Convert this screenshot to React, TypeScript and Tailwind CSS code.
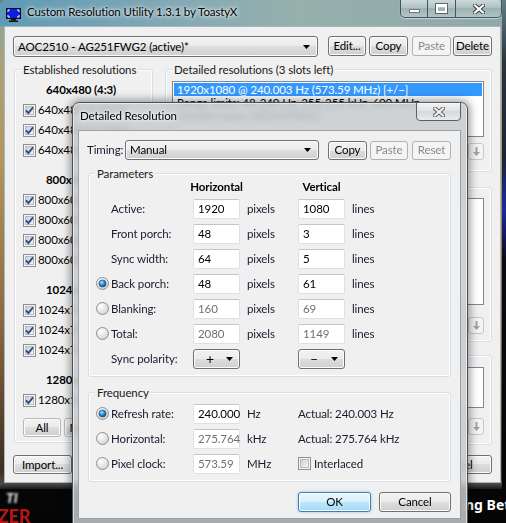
import React from "react";

type BP = { children?: React.ReactNode; className?: string; disabled?: boolean; focused?: boolean };

function Btn({ children, className = "", disabled, focused }: BP) {
  const look = disabled
    ? "border-[#adb2b5] bg-[#f4f4f4] text-[#8a8a8a]"
    : focused
    ? "border-[#3c7fb1] bg-[linear-gradient(#eaf6fd_0%,#d9f0fc_50%,#bee6fd_50%,#a7d9f5_100%)] text-black shadow-[inset_0_0_0_1px_#ffffff,0_0_3px_#7fc4ef]"
    : "border-[#707070] bg-[linear-gradient(#f2f2f2_0%,#ebebeb_50%,#dddddd_50%,#cfcfcf_100%)] text-black shadow-[inset_0_0_0_1px_#fcfcfc]";
  return (
    <div className={`flex shrink-0 items-center justify-center rounded-[3px] border text-[11.5px] leading-none ${look} ${className}`}>
      {children}
    </div>
  );
}

const DownTri = () => (
  <svg width="7" height="4" viewBox="0 0 7 4" className="shrink-0">
    <path d="M0 0H7L3.5 4Z" fill="#000" />
  </svg>
);

function Combo({ text, className = "" }: { text: string; className?: string }) {
  return (
    <div
      className={`flex shrink-0 items-center justify-between rounded-[3px] border border-[#707070] bg-[linear-gradient(#f2f2f2_0%,#ebebeb_50%,#dddddd_50%,#cfcfcf_100%)] pl-[4px] pr-[7px] text-[11.5px] leading-none shadow-[inset_0_0_0_1px_#fcfcfc] ${className}`}
    >
      <span className="whitespace-nowrap">{text}</span>
      <DownTri />
    </div>
  );
}

function Check({ checked }: { checked?: boolean }) {
  return (
    <svg width="13" height="13" viewBox="0 0 13 13" className="shrink-0">
      <defs>
        <linearGradient id="cbg" x1="0" y1="0" x2="1" y2="1">
          <stop offset="0" stopColor="#c9ced6" />
          <stop offset="1" stopColor="#f6f7f8" />
        </linearGradient>
      </defs>
      <rect x="0.5" y="0.5" width="12" height="12" fill="#f6f6f6" stroke="#8e8f8f" />
      <rect x="2.5" y="2.5" width="8" height="8" fill="url(#cbg)" stroke="#b5bac1" />
      {checked && <path d="M3 6.3 L5.4 9 L10 3.4" fill="none" stroke="#2f4584" strokeWidth="1.8" />}
    </svg>
  );
}

function Radio({ checked }: { checked?: boolean }) {
  return (
    <svg width="13" height="13" viewBox="0 0 13 13" className="shrink-0">
      <defs>
        <radialGradient id="rbg" cx="0.35" cy="0.3" r="0.8">
          <stop offset="0" stopColor="#ffffff" />
          <stop offset="1" stopColor="#d0d0d0" />
        </radialGradient>
        <radialGradient id="rdot" cx="0.4" cy="0.35" r="0.75">
          <stop offset="0" stopColor="#a5e8ff" />
          <stop offset="0.45" stopColor="#2b8fd8" />
          <stop offset="1" stopColor="#0b3a74" />
        </radialGradient>
      </defs>
      <circle cx="6.5" cy="6.5" r="6" fill="url(#rbg)" stroke="#8e8f8f" />
      {checked && <circle cx="6.5" cy="6.5" r="3.6" fill="url(#rdot)" stroke="#18467d" strokeWidth="0.6" />}
    </svg>
  );
}

function Inp({ v, grey }: { v: string; grey?: boolean }) {
  return (
    <div
      className={`flex h-[20px] w-[47px] shrink-0 items-center rounded-[2px] border border-[#dde1e6] border-t-[#c2c6cb] bg-white pl-[4px] text-[11.5px] leading-none ${
        grey ? "text-[#707070]" : "text-black"
      }`}
    >
      {v}
    </div>
  );
}

function Group({ label, className = "", children }: { label: string; className?: string; children?: React.ReactNode }) {
  return (
    <div className={`relative shrink-0 rounded-[3px] border border-[#d5dfe5] shadow-[inset_0_0_0_1px_#ffffff] ${className}`}>
      <span className="absolute left-[6px] top-[-8px] whitespace-nowrap bg-[#f0f0f0] px-[2px] text-[11.5px] leading-[16px] text-[#1a1a1a]">
        {label}
      </span>
      {children}
    </div>
  );
}

function ArrowBtn({ up }: { up?: boolean }) {
  return (
    <div className="flex h-[17px] w-[16px] items-center justify-center rounded-[3px] border border-[#c4c8cc] bg-[#f4f4f4]">
      <svg width="7" height="9" viewBox="0 0 7 9">
        <path d={up ? "M2.5 9H4.5V4H7L3.5 0L0 4H2.5Z" : "M2.5 0H4.5V5H7L3.5 9L0 5H2.5Z"} fill="#a3a3a3" />
      </svg>
    </div>
  );
}

function XGlyph({ color = "#ffffff", outline = "#3a3a3a" }: { color?: string; outline?: string }) {
  return (
    <svg width="12" height="10" viewBox="0 0 12 10">
      <path d="M2 1.5 L10 8.5 M10 1.5 L2 8.5" stroke={outline} strokeWidth="4" strokeLinecap="square" />
      <path d="M2 1.5 L10 8.5 M10 1.5 L2 8.5" stroke={color} strokeWidth="2.2" strokeLinecap="square" />
    </svg>
  );
}

function Caption() {
  const glass =
    "bg-[linear-gradient(180deg,rgba(255,255,255,0.55)_0%,rgba(255,255,255,0.28)_45%,rgba(255,255,255,0.1)_50%,rgba(255,255,255,0.3)_100%)]";
  return (
    <div className="ml-auto flex h-[18px] overflow-hidden rounded-b-[5px] border border-t-0 border-[#46545e] shadow-[0_1px_1px_rgba(255,255,255,0.5)]">
      <div className={`flex w-[27px] items-end justify-center border-r border-[#46545e] pb-[4px] ${glass}`}>
        <div className="h-[4px] w-[11px] border border-[#3c3c3c]/70 bg-white" />
      </div>
      <div className={`flex w-[28px] items-center justify-center border-r border-[#46545e] ${glass}`}>
        <div className="h-[9px] w-[11px] border-[2px] border-t-[3px] border-white shadow-[0_0_0_1px_rgba(40,40,40,0.6)]" />
      </div>
      <div className={`flex w-[45px] items-center justify-center ${glass}`}>
        <XGlyph />
      </div>
    </div>
  );
}

function AppIcon() {
  return (
    <svg width="15" height="14" viewBox="0 0 15 14" className="ml-[6px] mt-[8px] shrink-0">
      <rect x="0.5" y="0.5" width="14" height="10" fill="#0b1ee0" stroke="#101010" />
      <path d="M2 2H4M2 2V4M13 2H11M13 2V4M2 9H4M2 9V7M13 9H11M13 9V7" stroke="#ffffff" strokeWidth="1" fill="none" />
      <rect x="5" y="11" width="5" height="1.5" fill="#101010" />
      <rect x="3" y="12.5" width="9" height="1.5" fill="#101010" />
    </svg>
  );
}

const established = [
  { h: "640x480 (4:3)", r: ["640x480 @ 60 Hz", "640x480 @ 72 Hz", "640x480 @ 75 Hz"] },
  { h: "800x600 (4:3)", r: ["800x600 @ 56 Hz", "800x600 @ 60 Hz", "800x600 @ 72 Hz", "800x600 @ 75 Hz"] },
  { h: "1024x768 (4:3)", r: ["1024x768 @ 60 Hz", "1024x768 @ 70 Hz", "1024x768 @ 75 Hz"] },
  { h: "1280x1024 (5:4)", r: ["1280x1024 @ 75 Hz"] },
];

const params = [
  { radio: false, show: false, label: "Active:", h: "1920", v: "1080", grey: false },
  { radio: false, show: false, label: "Front porch:", h: "48", v: "3", grey: false },
  { radio: false, show: false, label: "Sync width:", h: "64", v: "5", grey: false },
  { radio: true, show: true, label: "Back porch:", h: "48", v: "61", grey: false },
  { radio: false, show: true, label: "Blanking:", h: "160", v: "69", grey: true },
  { radio: false, show: true, label: "Total:", h: "2080", v: "1149", grey: true },
];

function Listbox({ className = "", items, selected }: { className?: string; items: string[]; selected?: number }) {
  return (
    <div className={`shrink-0 overflow-hidden border border-[#828790] bg-white p-[1px] ${className}`}>
      {items.map((t, i) => (
        <div
          key={i}
          className={`whitespace-nowrap pl-[3px] text-[11.5px] leading-[13px] ${
            i === selected ? "bg-[#3399ff] text-white" : "text-black"
          }`}
        >
          {t}
        </div>
      ))}
    </div>
  );
}

function MainClient() {
  return (
    <div className="ml-[4px] flex h-[457px] w-[497px] flex-col border border-[#a9b5bb] bg-[#f0f0f0] pl-[8px] pt-[9px]">
      <div className="flex h-[21px] items-start">
        <Combo text="AOC2510 - AG251FWG2 (active)*" className="h-[21px] w-[305px]" />
        <Btn className="ml-[10px] h-[20px] w-[38px]">Edit...</Btn>
        <Btn className="ml-[3px] h-[20px] w-[39px]">Copy</Btn>
        <Btn disabled className="ml-[4px] h-[20px] w-[39px]">Paste</Btn>
        <Btn className="ml-[2px] h-[20px] w-[39px]">Delete</Btn>
      </div>
      <div className="ml-[1px] mt-[12px] flex items-start">
        <div className="flex w-[139px] flex-col">
          <Group label="Established resolutions" className="h-[374px] w-[139px] pt-[10px]">
            {established.map((g, gi) => (
              <div key={gi} className={gi > 0 ? "mt-[10px]" : ""}>
                <div className="flex h-[20px] items-center whitespace-nowrap pl-[31px] font-bold">{g.h}</div>
                {g.r.map((r) => (
                  <div key={r} className="flex h-[20px] items-center gap-[2px] whitespace-nowrap pl-[8px]">
                    <Check checked />
                    <span>{r}</span>
                  </div>
                ))}
              </div>
            ))}
            <div className="mt-[8px] flex gap-[3px] pl-[8px]">
              <Btn className="h-[19px] w-[38px] border-[#b4b9be] bg-[#f4f4f4] text-[#7f8ca6]">All</Btn>
              <Btn className="h-[19px] w-[38px] border-[#b4b9be] bg-[#f4f4f4] text-[#7f8ca6]">None</Btn>
            </div>
          </Group>
          <Btn className="ml-[-1px] mt-[12px] h-[19px] w-[59px]">Import...</Btn>
        </div>
        <div className="ml-[12px] flex w-[327px] flex-col">
          <Group label="Detailed resolutions (3 slots left)" className="h-[103px] w-[327px] pl-[6px] pt-[11px]">
            <Listbox
              className="h-[56px] w-[312px]"
              selected={0}
              items={[
                "1920x1080 @ 240.003 Hz (573.59 MHz) [+/\u2212]",
                "Range limits: 48-240 Hz, 255-255 kHz, 600 MHz",
                "Monitor name: AG251FWG2",
              ]}
            />
            <div className="mt-[6px] flex w-[312px] justify-end gap-[2px]">
              <ArrowBtn up />
              <ArrowBtn />
            </div>
          </Group>
          <Group label="Standard resolutions" className="mt-[15px] h-[155px] w-[327px] pl-[6px] pt-[10px]">
            <Listbox
              className="h-[107px] w-[312px]"
              items={["1920x1080 @ 60 Hz", "1680x1050 @ 60 Hz", "1440x900 @ 60 Hz", "1280x1024 @ 60 Hz", "1280x720 @ 60 Hz"]}
            />
            <div className="mt-[12px] flex w-[312px] justify-end gap-[2px]">
              <ArrowBtn up />
              <ArrowBtn />
            </div>
          </Group>
          <Group label="Extension blocks" className="mt-[13px] h-[90px] w-[327px] pl-[6px] pt-[11px]">
            <Listbox className="h-[41px] w-[312px]" items={["CEA-861", "DisplayID 1.3"]} />
            <div className="mt-[10px] flex w-[312px] justify-end gap-[2px]">
              <ArrowBtn up />
              <ArrowBtn />
            </div>
          </Group>
          <div className="mt-[10px] flex justify-end">
            <Btn className="h-[19px] w-[72px]">OK</Btn>
            <Btn className="ml-[8px] h-[19px] w-[72px]">Cancel</Btn>
          </div>
        </div>
      </div>
    </div>
  );
}

function Dialog() {
  const lab = "text-[#1a1a2e]";
  return (
    <div className="absolute left-[72px] top-[102px] h-[425px] w-[396px] rounded-t-[7px] border border-[#4b5055] bg-[#c6cacd]/85 shadow-[0_0_9px_2px_rgba(0,0,0,0.4),inset_0_0_0_1px_rgba(255,255,255,0.55)] backdrop-blur-[3px]">
      <div className="flex h-[27px] items-start">
        <span className="ml-[7px] mt-[6px] whitespace-nowrap text-[11.5px] leading-[14px] text-black [text-shadow:0_0_6px_#ffffff,0_0_3px_#ffffff]">
          Detailed Resolution
        </span>
        <div className="ml-auto mr-[6px] mt-[-1px] flex h-[19px] w-[45px] items-center justify-center rounded-b-[4px] border border-[#5a6066] bg-[linear-gradient(180deg,rgba(255,255,255,0.7)_0%,rgba(255,255,255,0.4)_45%,rgba(230,230,230,0.3)_50%,rgba(255,255,255,0.55)_100%)]">
          <XGlyph color="#f2f2f2" outline="#5b5b5b" />
        </div>
      </div>
      <div className="ml-[5px] flex h-[389px] w-[383px] flex-col border border-[#9aa0a6] bg-[#f0f0f0] pl-[8px] pt-[9px] text-[11.5px]">
        <div className="flex h-[20px] items-center">
          <span className={`w-[38px] shrink-0 ${lab}`}>Timing:</span>
          <Combo text="Manual" className="h-[20px] w-[194px]" />
          <Btn className="ml-[9px] h-[19px] w-[39px]">Copy</Btn>
          <Btn disabled className="ml-[3px] h-[19px] w-[38px]">Paste</Btn>
          <Btn disabled className="ml-[4px] h-[19px] w-[39px]">Reset</Btn>
        </div>

        <Group label="Parameters" className="ml-[1px] mt-[13px] h-[204px] w-[363px] pl-[7px] pt-[3px]">
          <div className="flex h-[19px] items-center font-bold text-black">
            <div className="w-[97px] shrink-0" />
            <div className="flex w-[47px] shrink-0 justify-center whitespace-nowrap">Horizontal</div>
            <div className="w-[58px] shrink-0" />
            <div className="flex w-[47px] shrink-0 justify-center whitespace-nowrap">Vertical</div>
          </div>
          {params.map((p) => (
            <div key={p.label} className="flex h-[25px] items-center">
              <div className="w-[15px] shrink-0">{p.show && <Radio checked={p.radio} />}</div>
              <span className={`w-[82px] shrink-0 whitespace-nowrap ${lab}`}>{p.label}</span>
              <Inp v={p.h} grey={p.grey} />
              <span className={`w-[58px] shrink-0 pl-[7px] ${lab}`}>pixels</span>
              <Inp v={p.v} grey={p.grey} />
              <span className={`shrink-0 pl-[7px] ${lab}`}>lines</span>
            </div>
          ))}
          <div className="flex h-[25px] items-center">
            <div className="w-[15px] shrink-0" />
            <span className={`w-[82px] shrink-0 whitespace-nowrap ${lab}`}>Sync polarity:</span>
            <div className="flex h-[20px] w-[47px] shrink-0 items-center justify-between rounded-[3px] border border-[#707070] bg-[linear-gradient(#f2f2f2_0%,#ebebeb_50%,#dddddd_50%,#cfcfcf_100%)] pl-[12px] pr-[6px] text-[14px] leading-none shadow-[inset_0_0_0_1px_#fcfcfc]">
              <span>+</span>
              <DownTri />
            </div>
            <div className="w-[58px] shrink-0" />
            <div className="flex h-[20px] w-[47px] shrink-0 items-center justify-between rounded-[3px] border border-[#707070] bg-[linear-gradient(#f2f2f2_0%,#ebebeb_50%,#dddddd_50%,#cfcfcf_100%)] pl-[11px] pr-[6px] text-[14px] leading-none shadow-[inset_0_0_0_1px_#fcfcfc]">
              <span>&ndash;</span>
              <DownTri />
            </div>
          </div>
        </Group>

        <Group label="Frequency" className="ml-[1px] mt-[15px] h-[90px] w-[363px] pl-[7px] pt-[8px]">
          <div className="flex h-[25px] items-center">
            <div className="w-[15px] shrink-0">
              <Radio checked />
            </div>
            <span className={`w-[82px] shrink-0 whitespace-nowrap ${lab}`}>Refresh rate:</span>
            <Inp v="240.000" />
            <span className={`w-[58px] shrink-0 pl-[7px] ${lab}`}>Hz</span>
            <span className={`whitespace-nowrap ${lab}`}>Actual: 240.003 Hz</span>
          </div>
          <div className="flex h-[25px] items-center">
            <div className="w-[15px] shrink-0">
              <Radio />
            </div>
            <span className={`w-[82px] shrink-0 whitespace-nowrap ${lab}`}>Horizontal:</span>
            <Inp v="275.764" grey />
            <span className={`w-[58px] shrink-0 pl-[7px] ${lab}`}>kHz</span>
            <span className={`whitespace-nowrap ${lab}`}>Actual: 275.764 kHz</span>
          </div>
          <div className="flex h-[25px] items-center">
            <div className="w-[15px] shrink-0">
              <Radio />
            </div>
            <span className={`w-[82px] shrink-0 whitespace-nowrap ${lab}`}>Pixel clock:</span>
            <Inp v="573.59" grey />
            <span className={`w-[58px] shrink-0 pl-[7px] ${lab}`}>MHz</span>
            <Check />
            <span className={`ml-[3px] whitespace-nowrap ${lab}`}>Interlaced</span>
          </div>
        </Group>

        <div className="ml-[211px] mt-[10px] flex">
          <Btn focused className="h-[20px] w-[73px]">OK</Btn>
          <Btn className="ml-[8px] h-[20px] w-[72px]">Cancel</Btn>
        </div>
      </div>
    </div>
  );
}

export default function App() {
  return (
    <div className="relative h-[523px] w-[506px] overflow-hidden bg-[linear-gradient(180deg,#5f7f88_0%,#2a3340_12%,#1b2436_30%,#1a2a9a_40%,#0a0a14_50%,#050505_100%)] font-['Lato','Noto_Sans',sans-serif] text-[11.5px] tracking-[-0.1px] text-black">
      <div className="flex h-[489px] w-[502px] flex-col rounded-t-[6px] bg-[linear-gradient(180deg,#7fa6b0_0px,#a9a27c_60px,#b3955f_160px,#8c6a42_320px,#3d2e22_470px,#4a4a4a_484px,#1a1a1a_489px)]">
        <div className="flex h-[26px] shrink-0 items-start rounded-t-[6px] bg-[linear-gradient(90deg,#5e9ab5_0%,#84a9b5_35%,#97b0ac_60%,#8ea9aa_100%)]">
          <AppIcon />
          <span className="ml-[6px] mt-[5px] whitespace-nowrap text-[11.5px] leading-[14px] text-black [text-shadow:0_0_6px_#ffffff,0_0_3px_#ffffff]">
            Custom Resolution Utility 1.3.1 by ToastyX
          </span>
          <Caption />
        </div>
        <MainClient />
      </div>
      <div className="flex h-[34px] w-[506px] items-start overflow-hidden">
        <div className="w-[72px] shrink-0 overflow-hidden leading-none opacity-90">
          <div className="ml-[6px] mt-[2px] text-[14px] font-black italic text-white blur-[0.8px]">TI</div>
          <div className="ml-[-2px] mt-[2px] text-[18px] font-black text-[#c81818] blur-[0.6px]">ZER</div>
        </div>
        <span className="ml-[393px] mt-[9px] whitespace-nowrap font-['Noto_Sans',sans-serif] text-[14px] font-bold leading-none tracking-normal text-white">
          ng Bet
        </span>
      </div>
      <Dialog />
    </div>
  );
}
